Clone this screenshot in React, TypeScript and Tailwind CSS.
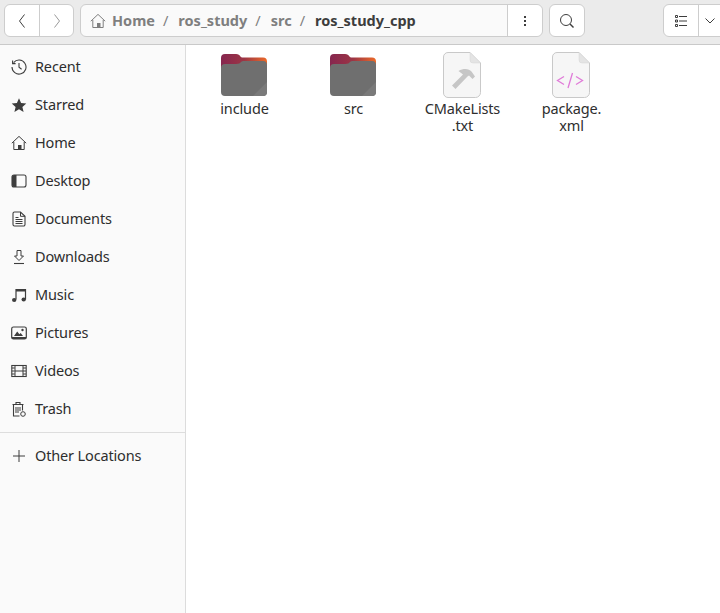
import type { ReactNode } from 'react';

const ink = '#3d3d3d';

function Svg({ children, size = 16 }: { children: ReactNode; size?: number }) {
  return (
    <svg width={size} height={size} viewBox="0 0 16 16" fill="none" stroke={ink} strokeWidth="1" className="shrink-0">
      {children}
    </svg>
  );
}

const HomeGlyph = () => (
  <>
    <path d="M0.8 8.2 8 1.4l7.2 6.8" strokeLinejoin="round" />
    <path d="M2.8 7v7.5h10.4V7" />
    <path d="M7 14.5V10h3.5v4.5z" fill={ink} stroke="none" />
  </>
);

const sidebarItems: { label: string; icon: ReactNode }[] = [
  {
    label: 'Recent',
    icon: (
      <Svg>
        <path d="M2.6 3.6A7 7 0 1 1 1 8" strokeWidth="1.1" />
        <path d="M1.6 1.6v3h3" strokeWidth="1.1" />
        <path d="M8 4v4.3l2.6 2" strokeWidth="1.1" />
      </Svg>
    ),
  },
  {
    label: 'Starred',
    icon: (
      <Svg>
        <path d="M8 1.2 10.1 6l5.2.5-3.9 3.4 1.2 5.1L8 12.3 3.4 15l1.2-5.1L.7 6.5 5.9 6z" fill={ink} stroke="none" />
      </Svg>
    ),
  },
  { label: 'Home', icon: <Svg><HomeGlyph /></Svg> },
  {
    label: 'Desktop',
    icon: (
      <Svg>
        <rect x="1" y="2" width="14" height="12" rx="2" strokeWidth="1.1" />
        <path d="M3 2h2.500v12H3a2 2 0 0 1-2-2V4a2 2 0 0 1 2-2z" fill={ink} stroke="none" />
      </Svg>
    ),
  },
  {
    label: 'Documents',
    icon: (
      <Svg>
        <path d="M3.500 1h6L14 5.300v8.200a1.500 1.500 0 0 1-1.500 1.500h-9A1.500 1.500 0 0 1 2 13.500v-11A1.500 1.500 0 0 1 3.500 1z" strokeWidth="1.100" />
        <path d="M9.500 1v4.300H14M4.500 6.500h3M4.500 8.500h7M4.500 10.500h7M4.500 12.500h7" />
      </Svg>
    ),
  },
  {
    label: 'Downloads',
    icon: (
      <Svg>
        <path d="M6 1.500h4v5.500h2.500L8 11.500 3.500 7H6z" strokeLinejoin="round" />
        <path d="M3 14.500h10" strokeWidth="1.100" />
      </Svg>
    ),
  },
  {
    label: 'Music',
    icon: (
      <Svg>
        <path d="M5 12.500V2.500h9.500v10" strokeWidth="1.200" />
        <path d="M5 2h9.500v2.500H5z" fill={ink} stroke="none" />
        <ellipse cx="3.200" cy="13" rx="2.200" ry="1.900" fill={ink} stroke="none" />
        <ellipse cx="12.700" cy="12.500" rx="2.200" ry="1.900" fill={ink} stroke="none" />
      </Svg>
    ),
  },
  {
    label: 'Pictures',
    icon: (
      <Svg>
        <rect x="0.700" y="2" width="14.600" height="12" rx="1.800" strokeWidth="1.200" />
        <path d="M0.700 12h14.600v.5a1.500 1.500 0 0 1-1.500 1.500H2.200a1.500 1.500 0 0 1-1.500-1.500z" fill={ink} stroke="none" />
        <path d="m3 11 3.200-4.500 2.200 2.800 1.300-1.200L12 11z" fill={ink} stroke="none" />
        <circle cx="11.500" cy="5" r="1.200" fill={ink} stroke="none" />
      </Svg>
    ),
  },
  {
    label: 'Videos',
    icon: (
      <Svg>
        <rect x="0.800" y="2.500" width="14.400" height="11" strokeWidth="1.100" />
        <path d="M4 2.500v11M12 2.500v11M4 8h8M.8 5h3M.8 8h3M.8 11h3M12 5h3M12 8h3M12 11h3" />
      </Svg>
    ),
  },
  {
    label: 'Trash',
    icon: (
      <Svg>
        <path d="M1.500 3.500h11M5 3.500V1.500h4v2M2.500 3.500v11.500h6M11.500 3.500v6" strokeWidth="1.100" />
        <path d="M5 6v6M7 6v6M9 6v4" />
        <circle cx="12" cy="13" r="2.300" />
      </Svg>
    ),
  },
];

function Sidebar() {
  return (
    <aside className="flex w-[186px] shrink-0 flex-col border-r border-[#dcdcdc] bg-[#fafafa]">
      <div className="flex flex-col pt-[3px]">
        {sidebarItems.map((item) => (
          <div key={item.label} className="flex h-[38px] items-center gap-[8px] pl-[11px]">
            {item.icon}
            <span className="tracking-[-0.15px]">{item.label}</span>
          </div>
        ))}
      </div>
      <div className="mt-[4px] border-t border-[#dddddd]" />
      <div className="flex h-[46px] items-center gap-[8px] pl-[11px]">
        <Svg>
          <path d="M8 2v12M2 8h12" strokeWidth="1" />
        </Svg>
        <span className="tracking-[-0.15px]">Other Locations</span>
      </div>
    </aside>
  );
}

function Toolbar() {
  return (
    <header className="flex h-[45px] shrink-0 items-center border-b border-[#c9c9c9] bg-[#ebebeb] pb-[3px] pl-[4px]">
      <div className="flex h-[33px] w-[70px] shrink-0 rounded-[6px] border border-[#cdcdcd] bg-white">
        <div className="flex w-[35px] items-center justify-center border-r border-[#cdcdcd]">
          <svg width="8" height="16" viewBox="0 0 8 16" fill="none" stroke="#3d3d3d" strokeWidth="1">
            <path d="M6.500 1.500 1.500 8l5 6.500" />
          </svg>
        </div>
        <div className="flex flex-1 items-center justify-center">
          <svg width="8" height="16" viewBox="0 0 8 16" fill="none" stroke="#9a9a9a" strokeWidth="1">
            <path d="M1.500 1.500 6.500 8l-5 6.500" />
          </svg>
        </div>
      </div>
      <div className="ml-[6px] flex h-[33px] w-[463px] shrink-0 rounded-[6px] border border-[#cdcdcd] bg-[#fafafa]">
        <div className="flex flex-1 items-center pl-[9px] font-bold text-[#7f7f7f]">
          <svg width="16" height="16" viewBox="0 0 16 16" fill="none" stroke="#7f7f7f" strokeWidth="1" className="shrink-0">
            <path d="M0.800 8.200 8 1.400l7.200 6.800" />
            <path d="M2.800 7v7.500h10.400V7" />
            <path d="M7 14.500V10h3.500v4.500z" fill="#7f7f7f" stroke="none" />
          </svg>
          <span className="ml-[6px]">Home</span>
          <span className="ml-[8px] font-normal">/</span>
          <span className="ml-[10px]">ros_study</span>
          <span className="ml-[8px] font-normal">/</span>
          <span className="ml-[10px]">src</span>
          <span className="ml-[8px] font-normal">/</span>
          <span className="ml-[10px] text-[#3d3d3d]">ros_study_cpp</span>
        </div>
        <div className="flex w-[35px] items-center justify-center rounded-r-[6px] border-l border-[#cdcdcd] bg-white">
          <span className="flex flex-col gap-[2px]">
            <i className="size-[2px] bg-[#3d3d3d]" />
            <i className="size-[2px] bg-[#3d3d3d]" />
            <i className="size-[2px] bg-[#3d3d3d]" />
          </span>
        </div>
      </div>
      <div className="ml-[6px] flex h-[33px] w-[36px] shrink-0 items-center justify-center rounded-[6px] border border-[#cdcdcd] bg-white">
        <svg width="16" height="16" viewBox="0 0 16 16" fill="none" stroke="#3d3d3d" strokeWidth="1">
          <circle cx="7" cy="7" r="5.500" />
          <path d="m11 11 3.500 3.500" strokeWidth="1.400" />
        </svg>
      </div>
      <div className="ml-[78px] flex h-[33px] w-[70px] shrink-0 rounded-[6px] border border-[#cdcdcd] bg-white">
        <div className="flex w-[35px] items-center justify-center border-r border-[#cdcdcd]">
          <svg width="14" height="14" viewBox="0 0 14 14" fill="none" stroke="#3d3d3d" strokeWidth="1">
            <path d="M5 2.500h8M5 7h8M5 11.500h8" />
            <path d="M1.500 1.500h2v2h-2zM1.500 6h2v2h-2zM1.500 10.500h2v2h-2z" />
          </svg>
        </div>
        <div className="flex w-[22px] items-center justify-center">
          <svg width="10" height="6" viewBox="0 0 10 6" fill="none" stroke="#3d3d3d" strokeWidth="1">
            <path d="m.5.500 4.500 4.500L9.500.5" />
          </svg>
        </div>
      </div>
    </header>
  );
}

function FolderIcon({ id }: { id: string }) {
  return (
    <svg width="46" height="42" viewBox="0 0 46 42">
      <defs>
        <linearGradient id={`${id}-tab`} x1="0" y1="0" x2="1" y2="0">
          <stop offset="0" stopColor="#86264f" />
          <stop offset="0.5" stopColor="#9c3545" />
          <stop offset="1" stopColor="#ec6a28" />
        </linearGradient>
      </defs>
      <path d="M4 0h11c2.500 0 3.500 1 4.500 2.500.5.700 1 1 2.500 1h20a4 4 0 0 1 4 4V20H0V4a4 4 0 0 1 4-4z" fill={`url(#${id}-tab)`} />
      <path d="M4 10h11c3 0 4-.8 5-2s2.500-1 4-1h18a4 4 0 0 1 4 4v27a4 4 0 0 1-4 4H4a4 4 0 0 1-4-4V14a4 4 0 0 1 4-4z" fill="#6f6f6f" />
      <path d="M46 28v10a4 4 0 0 1-4 4H32z" fill="#7a7a7a" />
    </svg>
  );
}

function FileIcon({ children }: { children: ReactNode }) {
  return (
    <svg width="38" height="46" viewBox="0 0 38 46">
      <path d="M5 .5h22L37.500 11v29.500a5 5 0 0 1-5 5H5a4.500 4.500 0 0 1-4.500-4.500V5A4.500 4.500 0 0 1 5 .5z" fill="#f6f6f6" stroke="#c9c9c9" />
      <path d="M27 .5V8a3 3 0 0 0 3 3h7.500z" fill="#e4e4e4" stroke="#d4d4d4" strokeWidth="0.500" />
      {children}
    </svg>
  );
}

const files: { name: string[]; icon: ReactNode }[] = [
  { name: ['include'], icon: <FolderIcon id="include" /> },
  { name: ['src'], icon: <FolderIcon id="src" /> },
  {
    name: ['CMakeLists', '.txt'],
    icon: (
      <FileIcon>
        <path d="M9 33.500 20 22.500l-4.500-3.500c5-3 10.500-2.500 13 .5l3.500 5-2.500 2.500-3.500-3.500-1.500 1L12.500 37z" fill="#c6c6c6" />
      </FileIcon>
    ),
  },
  {
    name: ['package.', 'xml'],
    icon: (
      <FileIcon>
        <path d="m12 24.500-6.500 4 6.500 4M24 24.500l6.500 4-6.500 4M20.500 21l-4.500 15" fill="none" stroke="#e07bd8" strokeWidth="1.300" />
      </FileIcon>
    ),
  },
];

function FileGrid() {
  return (
    <main className="flex flex-1 items-start bg-white pl-[4px] pt-[7px]">
      {files.map((file) => (
        <div key={file.name[0]} className="flex w-[109px] flex-col items-center">
          <div className="flex h-[46px] items-center justify-center pr-[2px]">{file.icon}</div>
          <div className="mt-[2px] flex flex-col items-center leading-[17px] tracking-[-0.15px]">
            {file.name.map((line) => (
              <span key={line}>{line}</span>
            ))}
          </div>
        </div>
      ))}
    </main>
  );
}

export default function App() {
  return (
    <div className="flex h-[613px] w-[720px] flex-col overflow-hidden bg-white font-['Noto_Sans','Open_Sans',sans-serif] text-[14.500px] text-[#2e2e2e]">
      <Toolbar />
      <div className="flex min-h-0 flex-1">
        <Sidebar />
        <FileGrid />
      </div>
    </div>
  );
}
